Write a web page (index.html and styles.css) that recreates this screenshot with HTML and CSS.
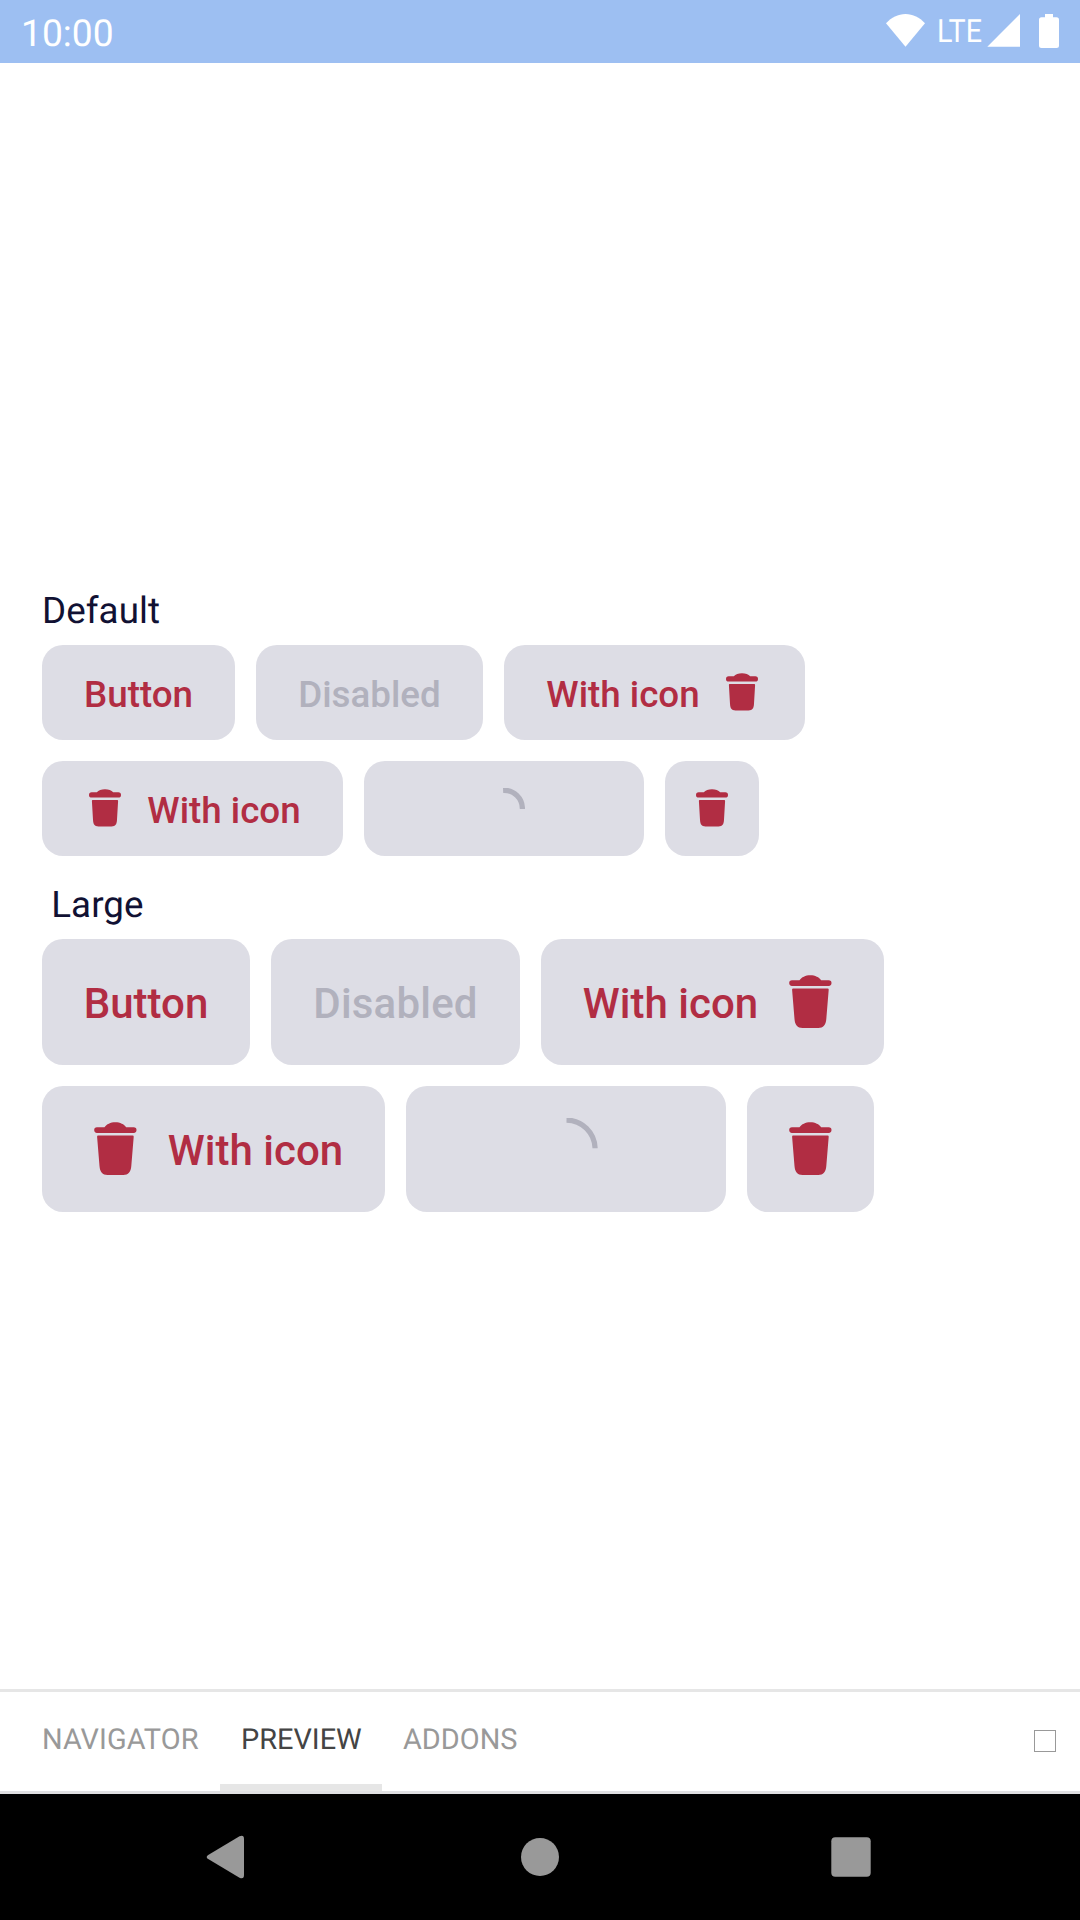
FILE: index.html
```html
<!DOCTYPE html>
<html lang="en">
<head>
<meta charset="utf-8">
<title>Button</title>
<link rel="stylesheet" href="styles.css">
</head>
<body>
<svg class="defs" width="0" height="0" aria-hidden="true">
  <symbol id="trash-sm" viewBox="0 0 42 42">
    <path d="M12.800 4.200C14.500 2.300 17.500 1.200 21 1.200S27.500 2.300 29.200 4.200H34.300a2.700 2.700 0 0 1 0 5.400H7.700a2.700 2.700 0 0 1 0-5.400Z"/>
    <path d="M8.700 12H33.300q.9 0 .8 1L33 31.700C32.700 36.400 31.500 38.400 27.500 38.400H14.500C10.500 38.400 9.300 36.400 9 31.700L7.900 13q-.1-1 .8-1Z"/>
  </symbol>
  <symbol id="trash-lg" viewBox="0 0 63 63">
    <path d="M20.500 9.300C22.500 6.300 26.500 4.300 31.300 4.300S40.200 6.300 42.200 9.300H49.700a2.800 2.800 0 0 1 0 5.600H13a2.800 2.800 0 0 1 0-5.600Z"/>
    <path d="M14.100 17.500H48.700q1.100 0 1 1.300L47.300 48C46.800 54.300 44.300 57 39.300 57H23.500C18.500 57 16 54.300 15.500 48L13.100 18.800q-.1-1.300 1-1.300Z"/>
  </symbol>
</svg>

<header class="status">
  <span class="clock">10:00</span>
  <svg class="status-icons" width="180" height="40" viewBox="884 10 180 40">
    <path d="M886 23.200C891.500 17.500 898 14 905.500 14S919.500 17.500 925 23.200L905.500 46.800Z"/>
    <text class="lte" x="937" y="42" textLength="45" lengthAdjust="spacingAndGlyphs">LTE</text>
    <path d="M1020 14V46.800H987.300Z"/>
    <path d="M1045 14h8v3.300h3.500q2.500 0 2.500 2.500V45.500q0 2.500-2.500 2.500h-15q-2.500 0-2.500-2.500V19.800q0-2.500 2.500-2.500h3.500Z"/>
  </svg>
</header>

<main class="stage">
  <h2 class="label">Default</h2>
  <div class="group">
    <div class="row">
      <button class="btn w-193"><span class="text">Button</span></button>
      <button class="btn w-227 off"><span class="text">Disabled</span></button>
      <button class="btn w-301"><span class="text">With icon</span><svg class="icon"><use href="#trash-sm"/></svg></button>
    </div>
    <div class="row">
      <button class="btn w-301"><svg class="icon"><use href="#trash-sm"/></svg><span class="text">With icon</span></button>
      <button class="btn w-280 loading"><svg class="spin" viewBox="-21 -21 42 42"><path d="M-.9-18.700A18.400 18.400 0 0 1 18.400 0"/></svg></button>
      <button class="btn w-94"><svg class="icon"><use href="#trash-sm"/></svg></button>
    </div>
  </div>
  <h2 class="label next"> Large</h2>
  <div class="group large">
    <div class="row">
      <button class="btn w-208"><span class="text">Button</span></button>
      <button class="btn w-249 off"><span class="text">Disabled</span></button>
      <button class="btn w-343"><span class="text">With icon</span><svg class="icon"><use href="#trash-lg"/></svg></button>
    </div>
    <div class="row">
      <button class="btn w-343"><svg class="icon"><use href="#trash-lg"/></svg><span class="text">With icon</span></button>
      <button class="btn w-320 loading"><svg class="spin" viewBox="-31.500 -31.500 63 63"><path d="M0-29.400A28.900 28.900 0 0 1 28.600-1.200"/></svg></button>
      <button class="btn w-127"><svg class="icon"><use href="#trash-lg"/></svg></button>
    </div>
  </div>
</main>

<nav class="tabs">
  <span class="tab first">NAVIGATOR</span>
  <span class="tab active">PREVIEW</span>
  <span class="tab">ADDONS</span>
  <span class="box"></span>
</nav>

<footer class="system">
  <svg width="1080" height="126" viewBox="0 0 1080 126">
    <path d="M208.200 60.900 239.500 42.300Q244 40.500 244 45V81Q244 85.500 239.500 83.700L208.200 65.100Q205.200 63 208.200 60.900Z"/>
    <circle cx="540" cy="63" r="19"/>
    <rect x="831.300" y="43.300" width="39.400" height="39.400" rx="4"/>
  </svg>
</footer>
</body>
</html>
```
FILE: styles.css
```css
* { box-sizing: border-box; }

body {
  margin: 0;
  width: 1080px;
  height: 1920px;
  display: flex;
  flex-direction: column;
  overflow: hidden;
  background: #fff;
  font-family: Roboto, "Liberation Sans", sans-serif;
  text-rendering: geometricPrecision;
}

svg { display: block; flex: none; }
.defs { position: absolute; }

.status {
  flex: none;
  height: 63px;
  padding: 0 16px 0 21px;
  display: flex;
  justify-content: space-between;
  align-items: flex-start;
  background: #9dbff2;
  color: #fff;
}
.clock { font-size: 37.2px; line-height: 44px; padding-top: 12px; }
.status-icons { fill: #fff; margin-top: 10px; }
.lte { font-size: 32px; }

.stage { flex: 1; padding: 526px 42px 0; }
.label {
  margin: 0;
  height: 56px;
  font-size: 36.75px;
  font-weight: 400;
  line-height: 43px;
  white-space: pre;
  letter-spacing: 0.08px;
  color: #111133;
}
.label.next { margin-top: 27px; }
.group, .row { display: flex; gap: 21px; }
.group { flex-direction: column; }

.btn {
  flex: none;
  height: 95px;
  padding: 0;
  border: 0;
  border-radius: 21px;
  display: flex;
  align-items: center;
  justify-content: center;
  gap: 21px;
  background: #dddde5;
  color: #b12d43;
  font: 500 36.75px/44px Roboto, "Liberation Sans", sans-serif;
  white-space: nowrap;
}
.btn.off { color: #b1b1bd; }
.text { padding-top: 4px; }
.large .btn { height: 126px; font-size: 42px; line-height: 50px; }
.large .off { letter-spacing: 0.2px; }

.icon { width: 42px; height: 42px; fill: #b12d43; }
.large .icon { width: 63px; height: 63px; }
.spin { width: 42px; height: 42px; fill: none; stroke: #b1b1bd; stroke-width: 5.25; }
.large .spin { width: 63px; height: 63px; }

.w-94 { width: 94px; }
.w-127 { width: 127px; }
.w-193 { width: 193px; }
.w-208 { width: 208px; }
.w-227 { width: 227px; }
.w-249 { width: 249px; }
.w-280 { width: 280px; }
.w-301 { width: 301px; }
.w-320 { width: 320px; }
.w-343 { width: 343px; }

.tabs {
  flex: none;
  height: 105px;
  padding: 0 24px 0 21px;
  display: flex;
  border-top: 3px solid #e6e6e6;
  border-bottom: 3px solid #e0e0e2;
}
.tab {
  padding: 2px 21px 0;
  font-size: 28.9px;
  line-height: 93px;
  height: 99px;
  color: #999;
  border-bottom: 7px solid transparent;
}
.tab.first { width: 199px; letter-spacing: 0.06px; }
.tab.active { width: 162px; color: #444; border-color: #e6e6e6; }
.box { margin: 38px 0 0 auto; width: 22px; height: 22px; border: 1px solid #999; }

.system { flex: none; height: 126px; background: #000; }
.system svg { fill: #999; }
```
